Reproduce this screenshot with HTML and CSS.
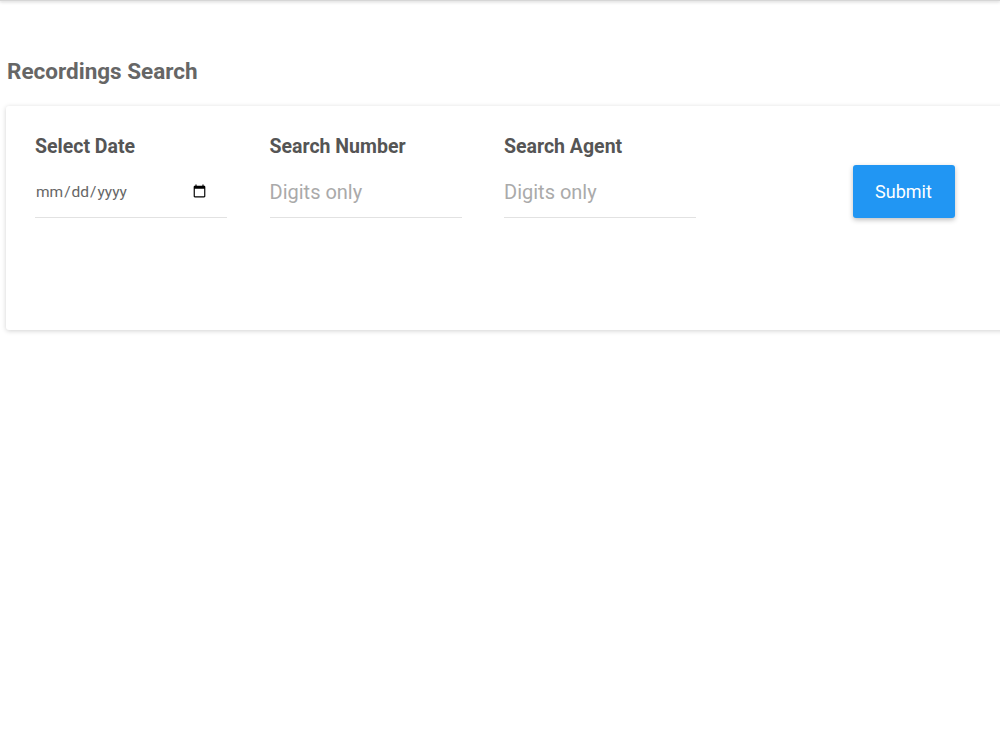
FILE: index.html
```html
<!DOCTYPE html>
<html>

<head>
  <title>Recordings Search</title>
  <link rel="stylesheet" href="styles.css">
</head>

<body>
  <div class="topbar"></div>
  <div class="page">
    <h1 class="page-title">Recordings Search</h1>
    <form class="search-card">
      <div class="search-row">
        <div class="field">
          <label class="field-label" for="searchDate">Select Date</label>
          <input type="date" id="searchDate" class="field-input date-input">
        </div>
        <div class="field">
          <label class="field-label" for="searchNumber">Search Number</label>
          <input type="text" id="searchNumber" class="field-input" placeholder="Digits only">
        </div>
        <div class="field">
          <label class="field-label" for="searchAgent">Search Agent</label>
          <input type="text" id="searchAgent" class="field-input" placeholder="Digits only">
        </div>
        <button type="button" class="submit-button">Submit</button>
      </div>
    </form>
  </div>
</body>

</html>
```

FILE: styles.css
```css
/* styles.css */
html,
body {
  margin: 0;
  overflow-x: hidden;
}

body {
  min-height: 100vh;
  font-family: Roboto, Arial, sans-serif;
  color: #555;
  background-color: #FFFFFF;
}

/* Top bar */
.topbar {
  height: 1px;
  background-color: #D6D6D6;
  box-shadow: 0 1px 3px rgba(0, 0, 0, 0.3);
}

/* Page */
.page {
  padding: 57px 0 40px 6px;
}

/* Page title */
.page-title {
  margin: 0 0 22px 1px;
  font-size: 22.5px;
  font-weight: 700;
  line-height: 26px;
  color: #666;
}

/* Search card */
.search-card {
  width: 1020px;
  height: 224px;
  box-sizing: border-box;
  padding: 30px 29px;
  background-color: #FFFFFF;
  border-radius: 3px;
  box-shadow: 0 1px 5px rgba(0, 0, 0, 0.18);
}

.search-row {
  display: flex;
  align-items: flex-end;
  gap: 42.5px;
}

/* Field */
.field {
  display: flex;
  flex-direction: column;
  width: 192px;
}

.field-label {
  font-size: 19.5px;
  font-weight: 700;
  line-height: 22px;
  color: #555;
  margin-bottom: 12px;
}

.field-input {
  height: 48px;
  box-sizing: border-box;
  padding: 0 0 3px 0;
  border: none;
  border-bottom: 1px solid #E2E2E2;
  outline: none;
  font-family: Roboto, Arial, sans-serif;
  font-size: 20px;
  color: #555;
  background: transparent;
}

.field-input::placeholder {
  color: #AAA;
}

.date-input {
  padding-right: 18px;
  font-size: 15.5px;
  color: #666;
}

/* Submit button */
.submit-button {
  width: 102px;
  height: 53px;
  margin-left: 114px;
  border: none;
  border-radius: 3px;
  background-color: #2196F3;
  color: #FFFFFF;
  font-family: Roboto, Arial, sans-serif;
  font-size: 18px;
  box-shadow: 0 2px 5px rgba(0, 0, 0, 0.25);
  cursor: pointer;
}
```
